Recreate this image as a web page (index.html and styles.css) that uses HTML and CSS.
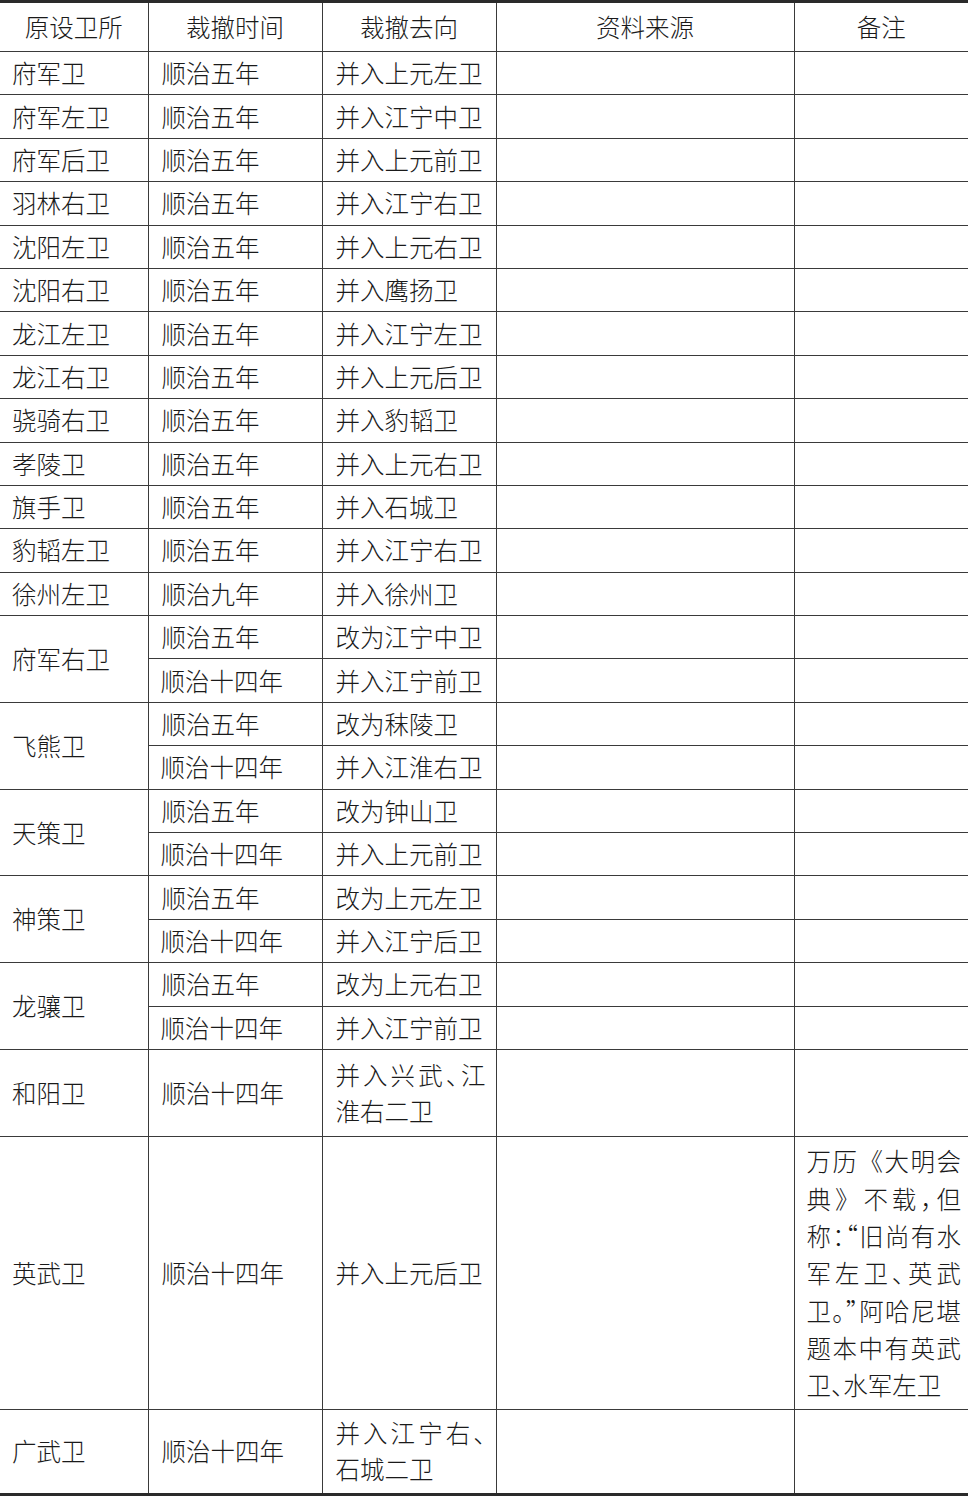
FILE: index.html
```html
<!DOCTYPE html>
<html lang="zh">
<head>
<meta charset="utf-8">
<title>裁撤卫所</title>
<link rel="stylesheet" href="styles.css">
</head>
<body>
<table class="tbl">
  <colgroup>
    <col class="c1"><col class="c2"><col class="c3"><col class="c4"><col class="c5">
  </colgroup>
  <thead>
    <tr class="head">
      <th>原设卫所</th><th>裁撤时间</th><th>裁撤去向</th><th>资料来源</th><th>备注</th>
    </tr>
  </thead>
  <tbody>
    <tr><td>府军卫</td><td>顺治五年</td><td>并入上元左卫</td><td></td><td></td></tr>
    <tr><td>府军左卫</td><td>顺治五年</td><td>并入江宁中卫</td><td></td><td></td></tr>
    <tr><td>府军后卫</td><td>顺治五年</td><td>并入上元前卫</td><td></td><td></td></tr>
    <tr><td>羽林右卫</td><td>顺治五年</td><td>并入江宁右卫</td><td></td><td></td></tr>
    <tr><td>沈阳左卫</td><td>顺治五年</td><td>并入上元右卫</td><td></td><td></td></tr>
    <tr><td>沈阳右卫</td><td>顺治五年</td><td>并入鹰扬卫</td><td></td><td></td></tr>
    <tr><td>龙江左卫</td><td>顺治五年</td><td>并入江宁左卫</td><td></td><td></td></tr>
    <tr><td>龙江右卫</td><td>顺治五年</td><td>并入上元后卫</td><td></td><td></td></tr>
    <tr><td>骁骑右卫</td><td>顺治五年</td><td>并入豹韬卫</td><td></td><td></td></tr>
    <tr><td>孝陵卫</td><td>顺治五年</td><td>并入上元右卫</td><td></td><td></td></tr>
    <tr><td>旗手卫</td><td>顺治五年</td><td>并入石城卫</td><td></td><td></td></tr>
    <tr><td>豹韬左卫</td><td>顺治五年</td><td>并入江宁右卫</td><td></td><td></td></tr>
    <tr><td>徐州左卫</td><td>顺治九年</td><td>并入徐州卫</td><td></td><td></td></tr>
    <tr><td rowspan="2">府军右卫</td><td>顺治五年</td><td>改为江宁中卫</td><td></td><td></td></tr>
    <tr><td>顺治十四年</td><td>并入江宁前卫</td><td></td><td></td></tr>
    <tr><td rowspan="2">飞熊卫</td><td>顺治五年</td><td>改为秣陵卫</td><td></td><td></td></tr>
    <tr><td>顺治十四年</td><td>并入江淮右卫</td><td></td><td></td></tr>
    <tr><td rowspan="2">天策卫</td><td>顺治五年</td><td>改为钟山卫</td><td></td><td></td></tr>
    <tr><td>顺治十四年</td><td>并入上元前卫</td><td></td><td></td></tr>
    <tr><td rowspan="2">神策卫</td><td>顺治五年</td><td>改为上元左卫</td><td></td><td></td></tr>
    <tr><td>顺治十四年</td><td>并入江宁后卫</td><td></td><td></td></tr>
    <tr><td rowspan="2">龙骧卫</td><td>顺治五年</td><td>改为上元右卫</td><td></td><td></td></tr>
    <tr><td>顺治十四年</td><td>并入江宁前卫</td><td></td><td></td></tr>
    <tr class="tall"><td>和阳卫</td><td>顺治十四年</td><td class="wrap"><div class="jl">并入兴武<span class="p">、</span>江</div><div>淮右二卫</div></td><td></td><td></td></tr>
    <tr class="note-row"><td>英武卫</td><td>顺治十四年</td><td>并入上元后卫</td><td></td>
      <td class="note">
        <div class="jl">万历《大明会</div>
        <div class="jl">典》不载<span class="p">，</span>但</div>
        <div class="jl">称<span class="p">：“</span>旧尚有水</div>
        <div class="jl">军左卫<span class="p">、</span>英武</div>
        <div class="jl">卫<span class="p">。”</span>阿哈尼堪</div>
        <div class="jl">题本中有英武</div>
        <div class="ll">卫<span class="p">、</span>水军左卫</div>
      </td></tr>
    <tr class="last"><td>广武卫</td><td>顺治十四年</td><td class="wrap"><div class="jl">并入江宁右<span class="p">、</span></div><div>石城二卫</div></td><td></td><td></td></tr>
  </tbody>
</table>
</body>
</html>
```

FILE: styles.css
```css
html, body {
  margin: 0;
  padding: 0;
  background: #ffffff;
}

body {
  font-family: "Noto Sans CJK SC", "Noto Sans CJK TC", sans-serif;
  font-weight: 300;
  color: #1a1a1a;
}

.tbl {
  width: 968px;
  border-collapse: collapse;
  table-layout: fixed;
  border-top: 3px solid #2a2a2a;
  border-bottom: 3px solid #2a2a2a;
  margin-top: 0;
}

.c1 { width: 148px; }
.c2 { width: 174px; }
.c3 { width: 174px; }
.c4 { width: 298px; }
.c5 { width: 174px; }

.tbl th,
.tbl td {
  border: 1px solid #3a3a3a;
  font-size: 24.5px;
  line-height: 30px;
  vertical-align: middle;
  padding: 0 6px 0 13px;
  text-align: left;
  white-space: nowrap;
}

.tbl th:first-child,
.tbl td:first-child {
  border-left: none;
}

.tbl th:last-child,
.tbl td:last-child {
  border-right: none;
}

.tbl td:first-child {
  padding-left: 12px;
}

.tbl th {
  font-weight: 300;
  text-align: center;
  padding: 0;
}

.head {
  height: 50px;
}

.tbl tbody tr {
  height: 43.4px;
}

.tbl tbody tr.tall {
  height: 87px;
}

.tbl tbody tr.note-row {
  height: 273px;
}

.tbl tbody tr.last {
  height: 85px;
}

.tbl td.wrap {
  line-height: 36px;
  padding-right: 10px;
}

.tbl td.note {
  line-height: 37.3px;
  padding: 0 7px 0 12px;
}

.jl {
  white-space: nowrap;
  text-align: justify;
  text-align-last: justify;
}

.ll {
  white-space: nowrap;
}

.p {
  font-feature-settings: "halt" 1;
}
```
